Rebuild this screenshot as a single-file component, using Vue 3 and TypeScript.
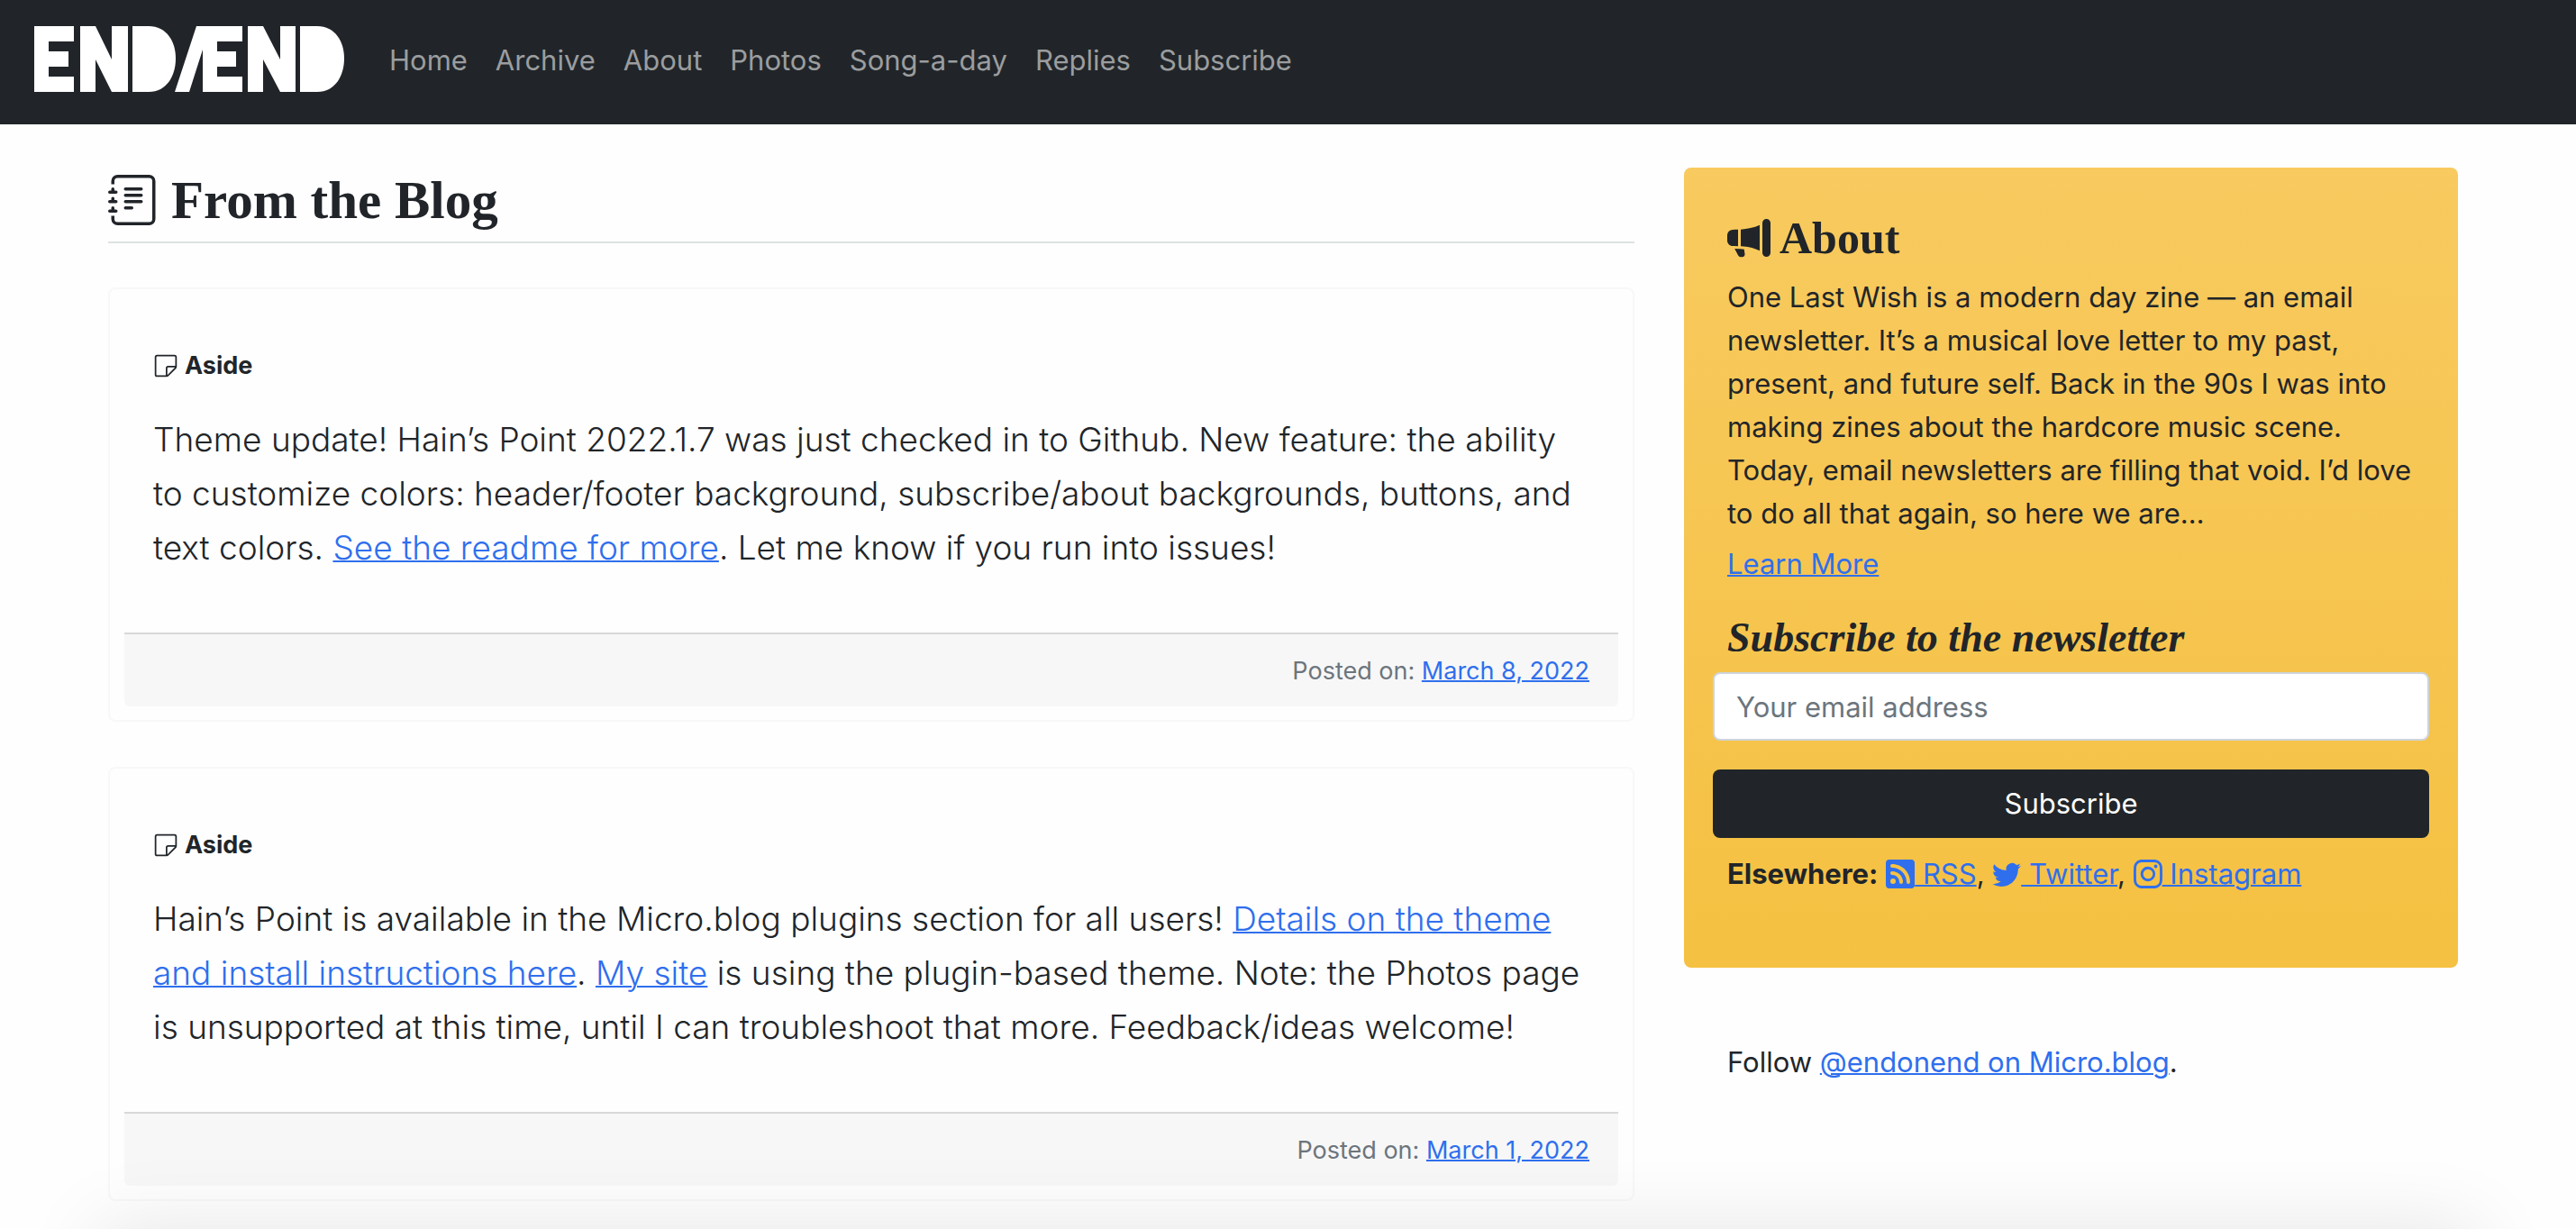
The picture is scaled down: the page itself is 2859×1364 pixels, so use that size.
<script setup lang="ts">
import { ref } from 'vue'

interface Chunk {
  text: string
  href?: string
}

interface Post {
  id: number
  body: Chunk[]
  date: string
}

const navItems: string[] = ['Home', 'Archive', 'About', 'Photos', 'Song-a-day', 'Replies', 'Subscribe']

const posts: Post[] = [
  {
    id: 1,
    body: [
      {
        text: 'Theme update! Hain’s Point 2022.1.7 was just checked in to Github. New feature: the ability to customize colors: header/footer background, subscribe/about backgrounds, buttons, and text colors. ',
      },
      { text: 'See the readme for more', href: '#readme' },
      { text: '. Let me know if you run into issues!' },
    ],
    date: 'March 8, 2022',
  },
  {
    id: 2,
    body: [
      { text: 'Hain’s Point is available in the Micro.blog plugins section for all users! ' },
      { text: 'Details on the theme and install instructions here', href: '#details' },
      { text: '. ' },
      { text: 'My site', href: '#site' },
      {
        text: ' is using the plugin-based theme. Note: the Photos page is unsupported at this time, until I can troubleshoot that more. Feedback/ideas welcome!',
      },
    ],
    date: 'March 1, 2022',
  },
]

const email = ref('')
</script>

<template>
  <div class="page">
    <header class="site-header">
      <a class="brand" href="#home" aria-label="End on End">
        <svg class="logo" viewBox="0 0 344 73" aria-hidden="true">
          <path d="M0 0H44V17H16V28H38V45H16V56H44V73H0Z" />
          <path d="M51 0H68L86 37V0H104V73H86L68 37V73H51Z" />
          <path d="M109 0H127C147 0 157 17 157 36S147 73 127 73H109Z" />
          <path d="M180 0H231V17H203V28H224V45H203V56H231V73H187V26L172 73H156Z" />
          <path d="M237 0H254L273 37V0H290V73H273L254 37V73H237Z" />
          <path d="M295 0H314C334 0 344 17 344 36S334 73 314 73H295Z" />
        </svg>
      </a>
      <nav class="nav" aria-label="Main">
        <a v-for="item in navItems" :key="item" :href="'#' + item.toLowerCase()">{{ item }}</a>
      </nav>
    </header>

    <div class="columns">
      <main>
        <h1 class="page-title">
          <svg class="title-icon" viewBox="0 0 16 16" aria-hidden="true">
            <path d="M5 10.5a.5.5 0 0 1 .5-.5h2a.5.5 0 0 1 0 1h-2a.5.5 0 0 1-.5-.5zm0-2a.5.5 0 0 1 .5-.5h5a.5.5 0 0 1 0 1h-5a.5.5 0 0 1-.5-.5zm0-2a.5.5 0 0 1 .5-.5h5a.5.5 0 0 1 0 1h-5a.5.5 0 0 1-.5-.5zm0-2a.5.5 0 0 1 .5-.5h5a.5.5 0 0 1 0 1h-5a.5.5 0 0 1-.5-.5z" />
            <path d="M3 0h10a2 2 0 0 1 2 2v12a2 2 0 0 1-2 2H3a2 2 0 0 1-2-2v-1h1v1a1 1 0 0 0 1 1h10a1 1 0 0 0 1-1V2a1 1 0 0 0-1-1H3a1 1 0 0 0-1 1v1H1V2a2 2 0 0 1 2-2z" />
            <path d="M1 5v-.5a.5.5 0 0 1 1 0V5h.5a.5.5 0 0 1 0 1h-2a.5.5 0 0 1 0-1H1zm0 3v-.5a.5.5 0 0 1 1 0V8h.5a.5.5 0 0 1 0 1h-2a.5.5 0 0 1 0-1H1zm0 3v-.5a.5.5 0 0 1 1 0v.5h.5a.5.5 0 0 1 0 1h-2a.5.5 0 0 1 0-1H1z" />
          </svg>
          From the Blog
        </h1>

        <article v-for="post in posts" :key="post.id" class="post">
          <div class="post-body">
            <h2 class="post-kind">
              <svg class="kind-icon" viewBox="0 0 16 16" aria-hidden="true">
                <path d="M2.5 1A1.5 1.5 0 0 0 1 2.5v11A1.5 1.5 0 0 0 2.5 15h6.086a1.5 1.5 0 0 0 1.06-.44l4.915-4.914A1.5 1.5 0 0 0 15 8.586V2.5A1.5 1.5 0 0 0 13.5 1h-11zM2 2.5a.5.5 0 0 1 .5-.5h11a.5.5 0 0 1 .5.5V8H9.5A1.5 1.5 0 0 0 8 9.5V14H2.5a.5.5 0 0 1-.5-.5v-11zm7 11.293V9.5a.5.5 0 0 1 .5-.5h4.293L9 13.793z" />
              </svg>
              Aside
            </h2>
            <p class="post-text">
              <template v-for="(chunk, i) in post.body" :key="i"><a v-if="chunk.href" :href="chunk.href">{{ chunk.text }}</a><template v-else>{{ chunk.text }}</template></template>
            </p>
          </div>
          <footer class="post-footer">Posted on: <a :href="'#post-' + post.id">{{ post.date }}</a></footer>
        </article>
      </main>

      <aside class="sidebar">
        <section class="panel">
          <h2 class="panel-title">
            <svg class="panel-icon" viewBox="0 0 16 16" aria-hidden="true">
              <path d="M13 2.5a1.5 1.5 0 0 1 3 0v11a1.5 1.5 0 0 1-3 0v-11zm-1 .724c-2.067.95-4.539 1.481-7 1.656v6.237a25.222 25.222 0 0 1 1.088.085c2.053.204 4.038.668 5.912 1.56V3.224zm-8 7.841V4.934c-.68.027-1.399.043-2.008.053A2.02 2.02 0 0 0 0 7v2c0 1.106.896 1.996 1.994 2.009a68.14 68.14 0 0 1 .496.008 64 64 0 0 1 1.51.048zm1.39 1.081c.285.021.569.047.85.078l.253 1.69a1 1 0 0 1-.983 1.187h-.548a1 1 0 0 1-.916-.599l-1.314-2.48a65.81 65.81 0 0 1 1.692.064c.327.017.65.037.966.06z" />
            </svg>
            About
          </h2>
          <p class="about-text">
            One Last Wish is a modern day zine — an email newsletter. It’s a musical love letter to my past, present, and
            future self. Back in the 90s I was into making zines about the hardcore music scene. Today, email newsletters
            are filling that void. I’d love to do all that again, so here we are…
          </p>
          <p class="learn-more"><a href="#about">Learn More</a></p>

          <form class="subscribe" @submit.prevent>
            <label class="subscribe-title" for="email">Subscribe to the newsletter</label>
            <input id="email" v-model="email" class="field" type="email" placeholder="Your email address" />
            <button class="submit" type="submit">Subscribe</button>
          </form>

          <p class="elsewhere">
            <strong>Elsewhere:</strong>{{ ' ' }}
            <a href="#rss"><svg class="link-icon" viewBox="0 0 16 16" aria-hidden="true"><path d="M2 0a2 2 0 0 0-2 2v12a2 2 0 0 0 2 2h12a2 2 0 0 0 2-2V2a2 2 0 0 0-2-2H2zm1.5 2.5c5.523 0 10 4.477 10 10a1 1 0 1 1-2 0 8 8 0 0 0-8-8 1 1 0 0 1 0-2zm0 4a6 6 0 0 1 6 6 1 1 0 1 1-2 0 4 4 0 0 0-4-4 1 1 0 0 1 0-2zm.5 7a1.5 1.5 0 1 1 0-3 1.5 1.5 0 0 1 0 3z" /></svg> RSS</a>,
            <a href="#twitter"><svg class="link-icon" viewBox="0 0 16 16" aria-hidden="true"><path d="M5.026 15c6.038 0 9.341-5.003 9.341-9.334 0-.14 0-.282-.006-.422A6.685 6.685 0 0 0 16 3.542a6.658 6.658 0 0 1-1.889.518 3.301 3.301 0 0 0 1.447-1.817 6.533 6.533 0 0 1-2.087.793A3.286 3.286 0 0 0 7.875 6.03a9.325 9.325 0 0 1-6.767-3.429 3.289 3.289 0 0 0 1.018 4.382A3.323 3.323 0 0 1 .64 6.575v.045a3.288 3.288 0 0 0 2.632 3.218 3.203 3.203 0 0 1-.865.115 3.23 3.23 0 0 1-.614-.057 3.283 3.283 0 0 0 3.067 2.277A6.588 6.588 0 0 1 .78 13.58a6.32 6.32 0 0 1-.78-.045A9.344 9.344 0 0 0 5.026 15z" /></svg> Twitter</a>,
            <a href="#instagram"><svg class="link-icon" viewBox="0 0 16 16" aria-hidden="true"><path d="M8 0C5.829 0 5.556.01 4.703.048 3.85.088 3.269.222 2.76.42a3.917 3.917 0 0 0-1.417.923A3.927 3.927 0 0 0 .42 2.76C.222 3.268.087 3.85.048 4.7.01 5.555 0 5.827 0 8.001c0 2.172.01 2.444.048 3.297.04.852.174 1.433.372 1.942.205.526.478.972.923 1.417.444.445.89.719 1.416.923.51.198 1.09.333 1.942.372C5.555 15.99 5.827 16 8 16s2.444-.01 3.298-.048c.851-.04 1.434-.174 1.943-.372a3.916 3.916 0 0 0 1.416-.923c.445-.445.718-.891.923-1.417.197-.509.332-1.09.372-1.942C15.99 10.445 16 10.173 16 8s-.01-2.445-.048-3.299c-.04-.851-.175-1.433-.372-1.941a3.926 3.926 0 0 0-.923-1.417A3.911 3.911 0 0 0 13.24.42c-.51-.198-1.092-.333-1.943-.372C10.443.01 10.172 0 7.998 0h.003zm-.717 1.442h.718c2.136 0 2.389.007 3.232.046.78.035 1.204.166 1.486.275.373.145.64.319.92.599.28.28.453.546.598.92.11.281.24.705.275 1.485.039.843.047 1.096.047 3.231s-.008 2.389-.047 3.232c-.035.78-.166 1.203-.275 1.485a2.47 2.47 0 0 1-.599.919c-.28.28-.546.453-.92.598-.28.11-.704.24-1.485.276-.843.038-1.096.047-3.232.047s-2.39-.009-3.233-.047c-.78-.036-1.203-.166-1.485-.276a2.478 2.478 0 0 1-.92-.598 2.48 2.48 0 0 1-.6-.92c-.109-.281-.24-.705-.275-1.485-.038-.843-.046-1.096-.046-3.233 0-2.136.008-2.388.046-3.231.036-.78.166-1.204.276-1.486.145-.373.319-.64.599-.92.28-.28.546-.453.92-.598.282-.11.705-.24 1.485-.276.738-.034 1.024-.044 2.515-.045v.002zm4.988 1.328a.96.96 0 1 0 0 1.92.96.96 0 0 0 0-1.92zm-4.27 1.122a4.109 4.109 0 1 0 0 8.217 4.109 4.109 0 0 0 0-8.217zm0 1.441a2.667 2.667 0 1 1 0 5.334 2.667 2.667 0 0 1 0-5.334z" /></svg> Instagram</a>
          </p>
        </section>

        <p class="follow">Follow <a href="#micro">@endonend on Micro.blog</a>.</p>
      </aside>
    </div>
  </div>
</template>

<style>
body {
  margin: 0;
  background: #fefefe;
}
</style>

<style scoped>
*,
*::before,
*::after {
  box-sizing: border-box;
}

.page {
  position: relative;
  min-height: 100vh;
  overflow: hidden;
  color: #212529;
  font-family: Inter, 'Liberation Sans', sans-serif;
  font-size: 31px;
  line-height: 48px;
}

.page::after {
  content: '';
  position: absolute;
  right: 109px;
  bottom: -100px;
  left: 109px;
  height: 100px;
  box-shadow: 0 0 88px rgba(0, 0, 0, 0.1);
  pointer-events: none;
}

a {
  color: #2f6fed;
  text-decoration-thickness: 2px;
}

h1,
h2,
p {
  margin: 0;
}

svg {
  fill: currentColor;
}

.site-header {
  display: flex;
  align-items: center;
  gap: 50px;
  padding: 29px 38px 36px;
  background: #212529;
}

.brand {
  display: block;
  color: #fff;
}

.logo {
  display: block;
  width: 344px;
  height: 73px;
}

.nav {
  display: flex;
  gap: 31px;
  padding-top: 2px;
}

.nav a {
  color: #9b9d9f;
  text-decoration: none;
}

.columns {
  display: grid;
  grid-template-columns: 1694fr 859fr;
  align-items: start;
  gap: 55px;
  padding: 48px 131px 31px 120px;
}

.page-title {
  display: flex;
  align-items: center;
  gap: 14px;
  margin-bottom: 49px;
  padding: 3px 0 13px;
  border-bottom: 2px solid #dee2e2;
  font: bold 59px/66px 'Liberation Serif', serif;
}

.title-icon {
  width: 56px;
  height: 56px;
}

.post {
  padding: 0 16px 15px;
  border: 2px solid #f8f8f8;
  border-radius: 8px;
}

.post + .post {
  margin-top: 50px;
}

.post-body {
  padding: 64px 32px 64px;
}

.post-kind {
  display: flex;
  align-items: center;
  gap: 7px;
  margin-bottom: 31px;
  font-size: 27px;
  font-weight: 700;
  line-height: 42px;
}

.kind-icon {
  width: 28px;
  height: 28px;
}

.post-text {
  font-size: 37px;
  font-weight: 300;
  line-height: 60px;
}

.post-footer {
  padding: 20px 32px 18px;
  border-top: 2px solid #d8d8d8;
  border-radius: 0 0 6px 6px;
  background: #f7f7f7;
  color: #6c757d;
  font-size: 27px;
  line-height: 42px;
  text-align: right;
}

.panel {
  padding: 48px 32px 80px;
  border-radius: 8px;
  background: linear-gradient(#f8ca5f, #f5c142);
}

.panel-title {
  display: flex;
  align-items: center;
  gap: 10px;
  padding: 0 16px;
  font: bold 50px/60px 'Liberation Serif', serif;
}

.panel-icon {
  width: 48px;
  height: 48px;
}

.about-text {
  padding: 12px 16px 0;
}

.learn-more {
  padding: 8px 16px 0;
}

.subscribe {
  display: flex;
  flex-direction: column;
}

.subscribe-title {
  padding: 32px 16px 12px;
  font: italic bold 46px/52px 'Liberation Serif', serif;
}

.field {
  width: 100%;
  height: 76px;
  padding: 0 24px;
  border: 2px solid #ced4da;
  border-radius: 8px;
  background: #fff;
  color: #212529;
  font: inherit;
}

.field::placeholder {
  color: #6c757d;
  opacity: 1;
}

.submit {
  height: 76px;
  margin-top: 32px;
  border: 0;
  border-radius: 8px;
  background: #212529;
  color: #fff;
  font: inherit;
}

.elsewhere {
  padding: 16px 16px 0;
}

.link-icon {
  width: 32px;
  height: 32px;
  vertical-align: -5px;
}

.follow {
  padding: 81px 48px 0;
}
</style>
